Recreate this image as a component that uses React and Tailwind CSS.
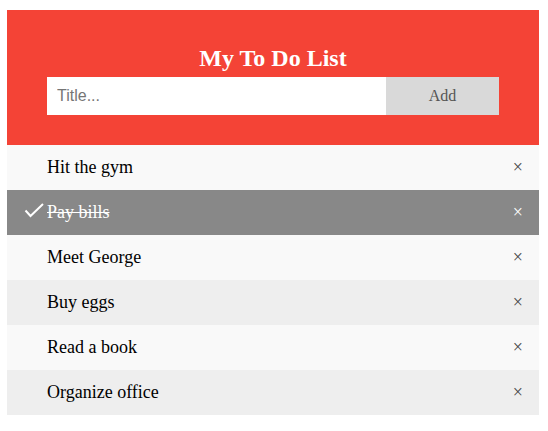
import { useState } from "react";

const initialItems = [
  { id: 1, title: "Hit the gym", done: false },
  { id: 2, title: "Pay bills", done: true },
  { id: 3, title: "Meet George", done: false },
  { id: 4, title: "Buy eggs", done: false },
  { id: 5, title: "Read a book", done: false },
  { id: 6, title: "Organize office", done: false },
];

function TodoItem({ item, index, onToggle, onRemove }) {
  let rowClass = index % 2 === 0 ? "bg-[#f9f9f9] text-black" : "bg-[#eeeeee] text-black";
  if (item.done) rowClass = "bg-[#888888] text-white";
  return (
    <li
      onClick={() => onToggle(item.id)}
      className={`relative flex h-[45px] cursor-pointer items-center pl-[40px] pr-[8px] text-[18px] ${rowClass}`}
    >
      {item.done && (
        <svg
          className="absolute left-[17px] top-[13px]"
          width="20"
          height="16"
          viewBox="0 0 20 16"
          fill="none"
        >
          <polyline
            points="1.5,7.5 6.5,13 19,1"
            stroke="#fff"
            strokeWidth="2"
          />
        </svg>
      )}
      <span className={item.done ? "line-through" : ""}>{item.title}</span>
      <span
        onClick={(e) => {
          e.stopPropagation();
          onRemove(item.id);
        }}
        className={`absolute right-0 top-0 flex h-[45px] items-center px-[16px] text-[18px] ${
          item.done ? "text-white" : "text-[#444]"
        }`}
      >
        ×
      </span>
    </li>
  );
}

export default function App() {
  const [items, setItems] = useState(initialItems);
  const [title, setTitle] = useState("");

  const addItem = () => {
    if (!title.trim()) return;
    setItems([...items, { id: Date.now(), title, done: false }]);
    setTitle("");
  };

  return (
    <div
      className="min-h-[431px] bg-white pl-[7px] pr-[9px] pt-[10px]"
      style={{ fontFamily: '"Liberation Serif", "Times New Roman", serif' }}
    >
      <div className="bg-[#f44336] px-[40px] pb-[30px] pt-[30px] text-center text-white">
        <h2 className="mb-[5px] mt-[5px] text-[24px] font-bold leading-[27px]">
          My To Do List
        </h2>
        <div className="flex h-[38px]">
          <input
            type="text"
            value={title}
            onChange={(e) => setTitle(e.target.value)}
            placeholder="Title..."
            className="w-3/4 bg-white px-[10px] text-[16px] text-black outline-none placeholder:text-[#757575]"
            style={{ fontFamily: '"Liberation Sans", Arial, sans-serif' }}
          />
          <button
            onClick={addItem}
            className="w-1/4 bg-[#d9d9d9] text-[16px] text-[#555]"
          >
            Add
          </button>
        </div>
      </div>
      <ul>
        {items.map((item, i) => (
          <TodoItem
            key={item.id}
            item={item}
            index={i}
            onToggle={(id) =>
              setItems(items.map((it) => (it.id === id ? { ...it, done: !it.done } : it)))
            }
            onRemove={(id) => setItems(items.filter((it) => it.id !== id))}
          />
        ))}
      </ul>
    </div>
  );
}
